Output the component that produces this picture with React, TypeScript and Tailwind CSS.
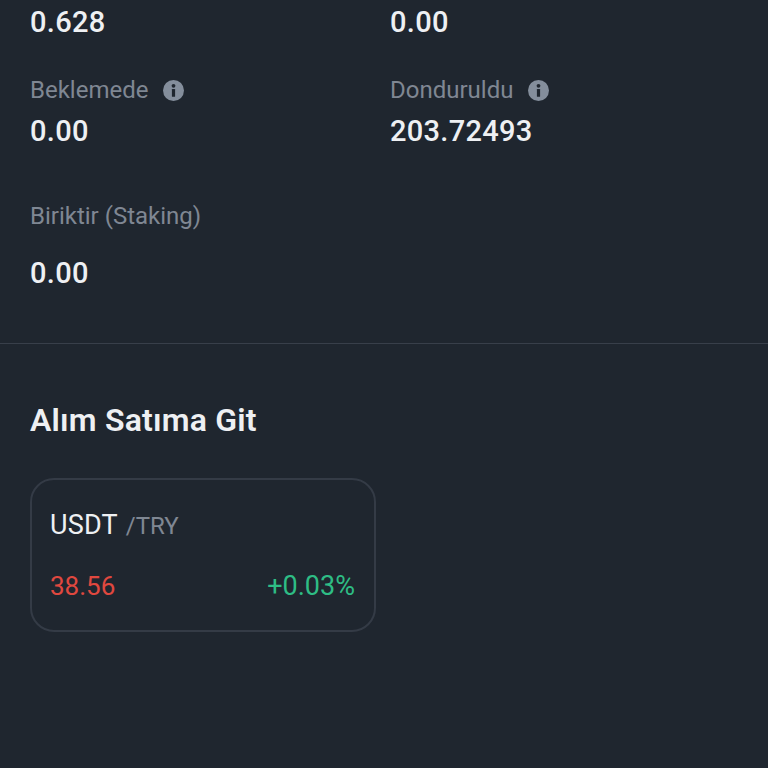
const FONT = "font-['Roboto','Liberation_Sans',sans-serif]";

function InfoIcon() {
  return (
    <svg width="21" height="21" viewBox="0 0 21 21" className="shrink-0">
      <circle cx="10.5" cy="10.5" r="10.5" fill="#848e9c" />
      <circle cx="10.5" cy="5.8" r="1.9" fill="#1f262f" />
      <rect x="8.9" y="9" width="3.2" height="7.8" rx="0.6" fill="#1f262f" />
    </svg>
  );
}

function Label({ text, info }: { text: string; info?: boolean }) {
  return (
    <div className="flex h-[28px] items-center gap-[15px]">
      <span className="text-[24px] leading-[28px] text-[#7f8793]">{text}</span>
      {info && <InfoIcon />}
    </div>
  );
}

function Value({ text }: { text: string }) {
  return <div className="text-[29px] leading-[36px] font-medium tracking-[0.3px] text-[#eef0f3]">{text}</div>;
}

export default function App() {
  return (
    <div className={`${FONT} h-[768px] w-[768px] overflow-hidden bg-[#1f262f]`}>
      <div className="h-[344px] border-b border-[#383f4a] pt-[4px]">
        <div className="grid grid-cols-[360px_1fr] pl-[30px]">
          <Value text="0.628" />
          <Value text="0.00" />
          <div className="mt-[36px]">
            <Label text="Beklemede" info />
            <div className="mt-[9px]">
              <Value text="0.00" />
            </div>
          </div>
          <div className="mt-[36px]">
            <Label text="Donduruldu" info />
            <div className="mt-[9px]">
              <Value text="203.72493" />
            </div>
          </div>
          <div className="col-span-2 mt-[53px]">
            <Label text="Biriktir (Staking)" />
            <div className="mt-[25px]">
              <Value text="0.00" />
            </div>
          </div>
        </div>
      </div>

      <div className="px-[30px] pt-[56px]">
        <h2 className="text-[32px] leading-[40px] font-semibold tracking-[0.2px] text-[#eef0f3]">Alım Satıma Git</h2>
        <div className="mt-[38px] h-[154px] w-[346px] rounded-[24px] border-2 border-[#343b46] pr-[19px] pl-[18px] pt-[28px]">
          <div className="flex items-baseline gap-[8px] leading-[34px]">
            <span className="text-[27px] tracking-[0.2px] text-[#eef0f3]">USDT</span>
            <span className="text-[24px] text-[#7f8793]">/TRY</span>
          </div>
          <div className="mt-[26px] flex items-center justify-between leading-[34px]">
            <span className="text-[26px] text-[#e0483f]">38.56</span>
            <span className="text-[27px] text-[#2ebd85]">+0.03%</span>
          </div>
        </div>
      </div>
    </div>
  );
}
